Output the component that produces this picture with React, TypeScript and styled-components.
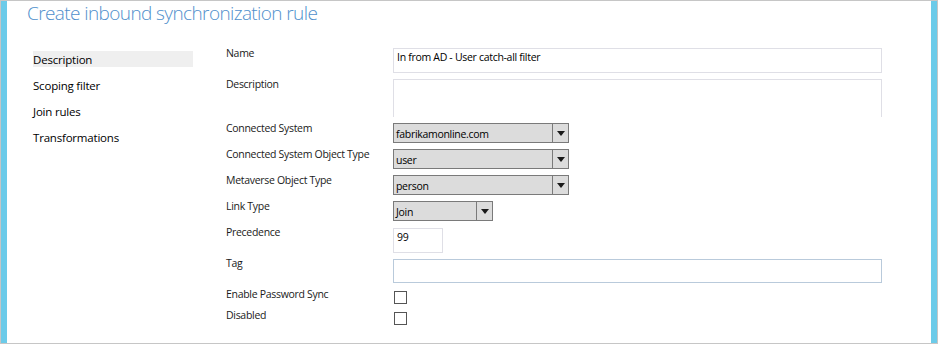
import React from "react";
import styled, { createGlobalStyle } from "styled-components";

const Global = createGlobalStyle`
  html, body { margin: 0; padding: 0; background: #fff; overflow: hidden; }
  * { box-sizing: border-box; }
`;

const FONT = `"Open Sans", "Noto Sans", "Liberation Sans", sans-serif`;

const Frame = styled.div`
  width: 938px;
  height: 344px;
  border: 1px solid #c6c6c6;
  background: #fff;
  display: flex;
  flex-direction: column;
`;

const Inner = styled.div`
  flex: 1;
  border-left: 6px solid #6ccbe9;
  border-right: 6px solid #6ccbe9;
  display: flex;
  flex-direction: column;
  font-family: ${FONT};
  color: #1a1a1a;
`;

const Header = styled.div`
  height: 40px;
  padding-left: 20px;
  padding-top: 0;
`;

const Title = styled.h1`
  margin: 0;
  font-family: ${FONT};
  font-weight: 300;
  font-size: 19px;
  letter-spacing: -0.6px;
  line-height: 24px;
  color: #4f8fcc;
`;

const Main = styled.div`
  display: grid;
  grid-template-columns: 160px 1fr;
  column-gap: 33px;
  padding-left: 26px;
  padding-top: 7px;
`;

const Nav = styled.ul`
  list-style: none;
  margin: 0;
  padding: 3px 0 0;
  display: flex;
  flex-direction: column;
  gap: 10px;
`;

const NavItem = styled.li<{ $active?: boolean }>`
  height: 16px;
  font-size: 11.5px;
  letter-spacing: -0.2px;
  line-height: 16px;
  padding-top: 1px;
  color: #000;
  background: ${(p) => (p.$active ? "#efefef" : "transparent")};
`;

const Form = styled.div`
  display: grid;
  grid-template-columns: 167px 489px;
  row-gap: 6px;
  align-items: start;
`;

const Label = styled.div<{ $mt?: number }>`
  font-size: 10.5px;
  letter-spacing: -0.3px;
  line-height: 13px;
  margin-top: ${(p) => (p.$mt ?? 0) - 1}px;
  color: #1a1a1a;
  white-space: nowrap;
`;

const Field = styled.div<{ $mt?: number }>`
  margin-top: ${(p) => p.$mt ?? 0}px;
  display: flex;
`;

const TextBox = styled.div<{ $w?: number; $h: number; $open?: boolean; $blue?: boolean }>`
  width: ${(p) => p.$w ?? 489}px;
  height: ${(p) => p.$h}px;
  border: 1px solid ${(p) => (p.$blue ? "#b9cadb" : "#dfdfe6")};
  border-bottom: ${(p) => (p.$open ? "none" : undefined)};
  background: #fff;
  font-size: 10.5px;
  letter-spacing: -0.3px;
  line-height: 13px;
  padding: 2px 0 0 3px;
  color: #000;
`;

const Select = styled.div<{ $w: number }>`
  width: ${(p) => p.$w}px;
  height: 20px;
  border: 1px solid #7a7a7a;
  background: #dcdcdc;
  display: flex;
  font-size: 10.5px;
  letter-spacing: -0.3px;
  color: #000;
`;

const SelectValue = styled.div`
  flex: 1;
  padding: 4px 0 0 2px;
  line-height: 13px;
  border-right: 1px solid #7a7a7a;
`;

const SelectButton = styled.div`
  width: 15px;
  display: flex;
  align-items: center;
  justify-content: center;
`;

const Arrow = styled.span`
  width: 0;
  height: 0;
  border-left: 4px solid transparent;
  border-right: 4px solid transparent;
  border-top: 5px solid #1a1a1a;
`;

const Check = styled.div`
  width: 13px;
  height: 13px;
  margin-left: 1px;
  border: 1px solid #555;
  background: #fff;
`;

const Drop = ({ w, value }: { w: number; value: string }) => (
  <Select $w={w}>
    <SelectValue>{value}</SelectValue>
    <SelectButton>
      <Arrow />
    </SelectButton>
  </Select>
);

export default function App() {
  return (
    <>
      <Global />
      <Frame>
        <Inner>
          <Header>
            <Title>Create inbound synchronization rule</Title>
          </Header>
          <Main>
            <Nav>
              <NavItem $active>Description</NavItem>
              <NavItem>Scoping filter</NavItem>
              <NavItem>Join rules</NavItem>
              <NavItem>Transformations</NavItem>
            </Nav>
            <Form>
              <Label>Name</Label>
              <Field>
                <TextBox $h={25}>In from AD - User catch-all filter</TextBox>
              </Field>

              <Label>Description</Label>
              <Field>
                <TextBox $h={38} $open />
              </Field>

              <Label>Connected System</Label>
              <Field>
                <Drop w={176} value="fabrikamonline.com" />
              </Field>

              <Label>Connected System Object Type</Label>
              <Field>
                <Drop w={176} value="user" />
              </Field>

              <Label>Metaverse Object Type</Label>
              <Field>
                <Drop w={176} value="person" />
              </Field>

              <Label>Link Type</Label>
              <Field>
                <Drop w={100} value="Join" />
              </Field>

              <Label $mt={0}>Precedence</Label>
              <Field $mt={1}>
                <TextBox $w={50} $h={25}>99</TextBox>
              </Field>

              <Label $mt={-1}>Tag</Label>
              <Field>
                <TextBox $h={24} $blue />
              </Field>

              <Label $mt={0}>Enable Password Sync</Label>
              <Field $mt={2}>
                <Check />
              </Field>

              <Label $mt={0}>Disabled</Label>
              <Field $mt={2}>
                <Check />
              </Field>
            </Form>
          </Main>
        </Inner>
      </Frame>
    </>
  );
}
